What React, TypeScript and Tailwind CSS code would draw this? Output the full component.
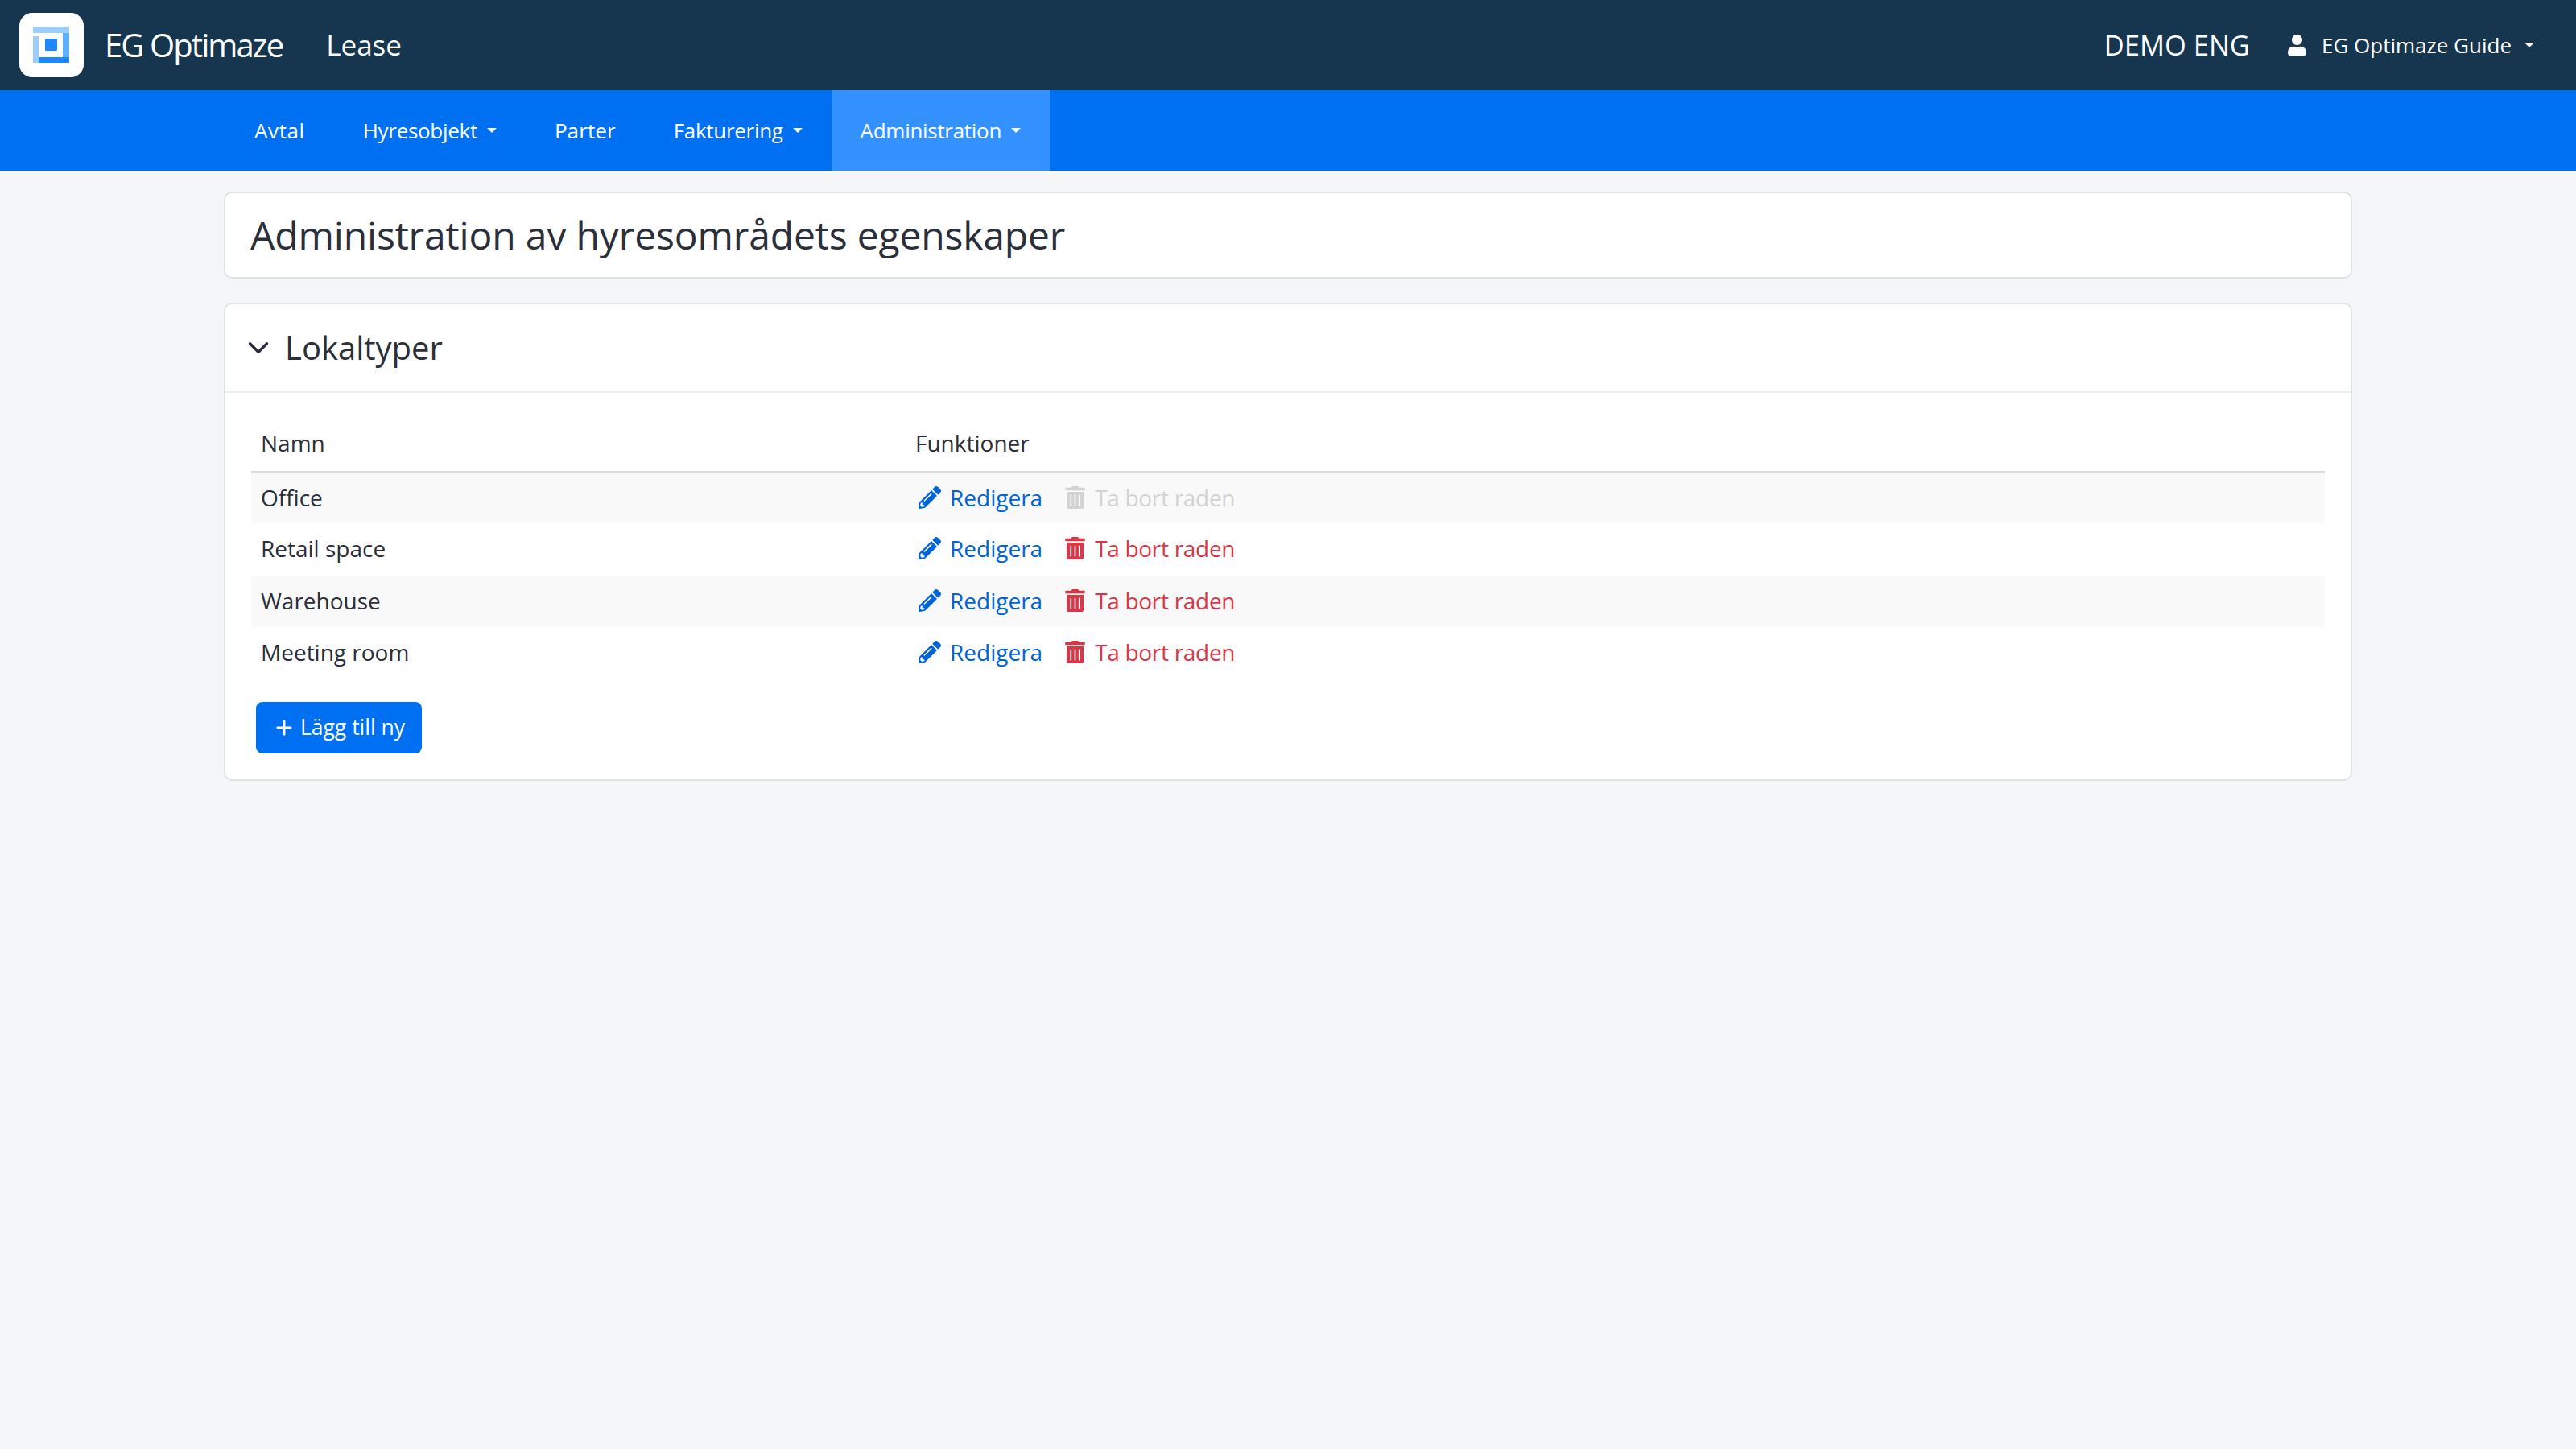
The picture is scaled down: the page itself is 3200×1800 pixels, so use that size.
import { ChevronDown, Plus } from "lucide-react";
import { FaPencilAlt, FaTrashAlt, FaUser } from "react-icons/fa";

const rows = [
  { name: "Office", locked: true },
  { name: "Retail space", locked: false },
  { name: "Warehouse", locked: false },
  { name: "Meeting room", locked: false },
];

function Caret({ className }: { className?: string }) {
  return <span className={`inline-block border-x-[6px] border-t-[6px] border-x-transparent border-t-white ${className ?? "ml-3"}`} />;
}

function Logo() {
  return (
    <div className="flex h-20 w-20 items-center justify-center rounded-2xl bg-white">
      <svg width="46" height="46" viewBox="0 0 46 46">
        <rect x="0" y="0" width="45" height="8" fill="#99ceff" />
        <rect x="0" y="12" width="7" height="33" fill="#99ceff" />
        <rect x="37" y="8" width="8" height="30" fill="#5cb0ff" />
        <rect x="7" y="38" width="38" height="7" fill="#1e88ff" />
        <rect x="15" y="15" width="15" height="15" rx="1" fill="#1e88ff" />
      </svg>
    </div>
  );
}

function NavItem({ label, menu, active, spacing }: { label: string; menu?: boolean; active?: boolean; spacing?: string }) {
  return (
    <a className={`flex h-full items-center px-9 text-[26px] text-white ${spacing ?? "tracking-[-0.3px]"} ${active ? "bg-[#3392ff]" : ""}`}>
      {label}
      {menu && <Caret />}
    </a>
  );
}

export default function App() {
  return (
    <div className="min-h-screen bg-[#f5f6f8] font-['Open_Sans','Noto_Sans',sans-serif] text-[#2a2f3a]">
      <header className="flex h-28 items-center justify-between bg-[#163650] pl-6 pr-[52px] text-white">
        <div className="flex items-center">
          <Logo />
          <span className="ml-[26px] text-[40px] tracking-[-1.9px]">EG Optimaze</span>
          <span className="ml-[54px] text-[35px]">Lease</span>
        </div>
        <div className="flex items-center">
          <span className="text-[34.5px]">DEMO ENG</span>
          <FaUser className="ml-[47px] h-[26px] w-[23px]" />
          <span className="ml-[19px] text-[26px]">EG Optimaze Guide</span>
          <Caret className="ml-4" />
        </div>
      </header>

      <nav className="flex h-[100px] items-center bg-[#0070f2] pl-[280px]">
        <NavItem label="Avtal" spacing="tracking-[0.6px]" />
        <NavItem label="Hyresobjekt" menu />
        <NavItem label="Parter" spacing="tracking-[0.1px]" />
        <NavItem label="Fakturering" menu />
        <NavItem label="Administration" menu active />
      </nav>

      <main className="mx-[278px] flex flex-col gap-[30px] pt-[26px]">
        <section className="flex h-[108px] items-center rounded-[10px] border-2 border-[#e2e3e5] bg-white px-[29px]">
          <h1 className="ml-[2px] text-[48px] tracking-[-0.15px]">Administration av hyresområdets egenskaper</h1>
        </section>

        <section className="rounded-[10px] border-2 border-[#e2e3e5] bg-white">
          <div className="flex h-[110px] items-center border-b-2 border-[#eeeeee] pl-[20px]">
            <ChevronDown className="h-[42px] w-[42px]" strokeWidth={2} />
            <h2 className="ml-[12px] text-[40px]">Lokaltyper</h2>
          </div>

          <div className="px-[32px] pb-[32px] pt-[30px]">
            <table className="w-full border-collapse text-[28px]">
              <thead>
                <tr className="h-[68px] border-b-2 border-[#dcdcdc] text-left">
                  <th className="w-[813px] px-3 pb-1 font-medium">Namn</th>
                  <th className="px-3 pb-1 font-medium">Funktioner</th>
                </tr>
              </thead>
              <tbody>
                {rows.map((row, i) => (
                  <tr key={row.name} className={`h-[64.3px] ${i % 2 === 0 ? "bg-[#f9f9f9]" : ""}`}>
                    <td className="px-3 pb-0.5">{row.name}</td>
                    <td className="px-3 pb-0.5">
                      <div className="flex items-center">
                        <a className="ml-1 flex items-center text-[#0064d9]">
                          <FaPencilAlt className="h-[28px] w-[28px]" />
                          <span className="ml-[11px]">Redigera</span>
                        </a>
                        <a className={`ml-7 flex items-center ${row.locked ? "text-[#d3d3d3]" : "text-[#dc3545]"}`}>
                          <FaTrashAlt className="h-[28px] w-[25px]" />
                          <span className="ml-3 tracking-[-0.3px]">Ta bort raden</span>
                        </a>
                      </div>
                    </td>
                  </tr>
                ))}
              </tbody>
            </table>

            <button className="ml-[6px] mt-[29px] flex h-16 w-[206px] items-center justify-center rounded-lg bg-[#0070f2] text-[26.5px] text-white">
              <Plus className="mr-[6px] h-7 w-7" strokeWidth={2.5} />
              Lägg till ny
            </button>
          </div>
        </section>
      </main>
    </div>
  );
}
